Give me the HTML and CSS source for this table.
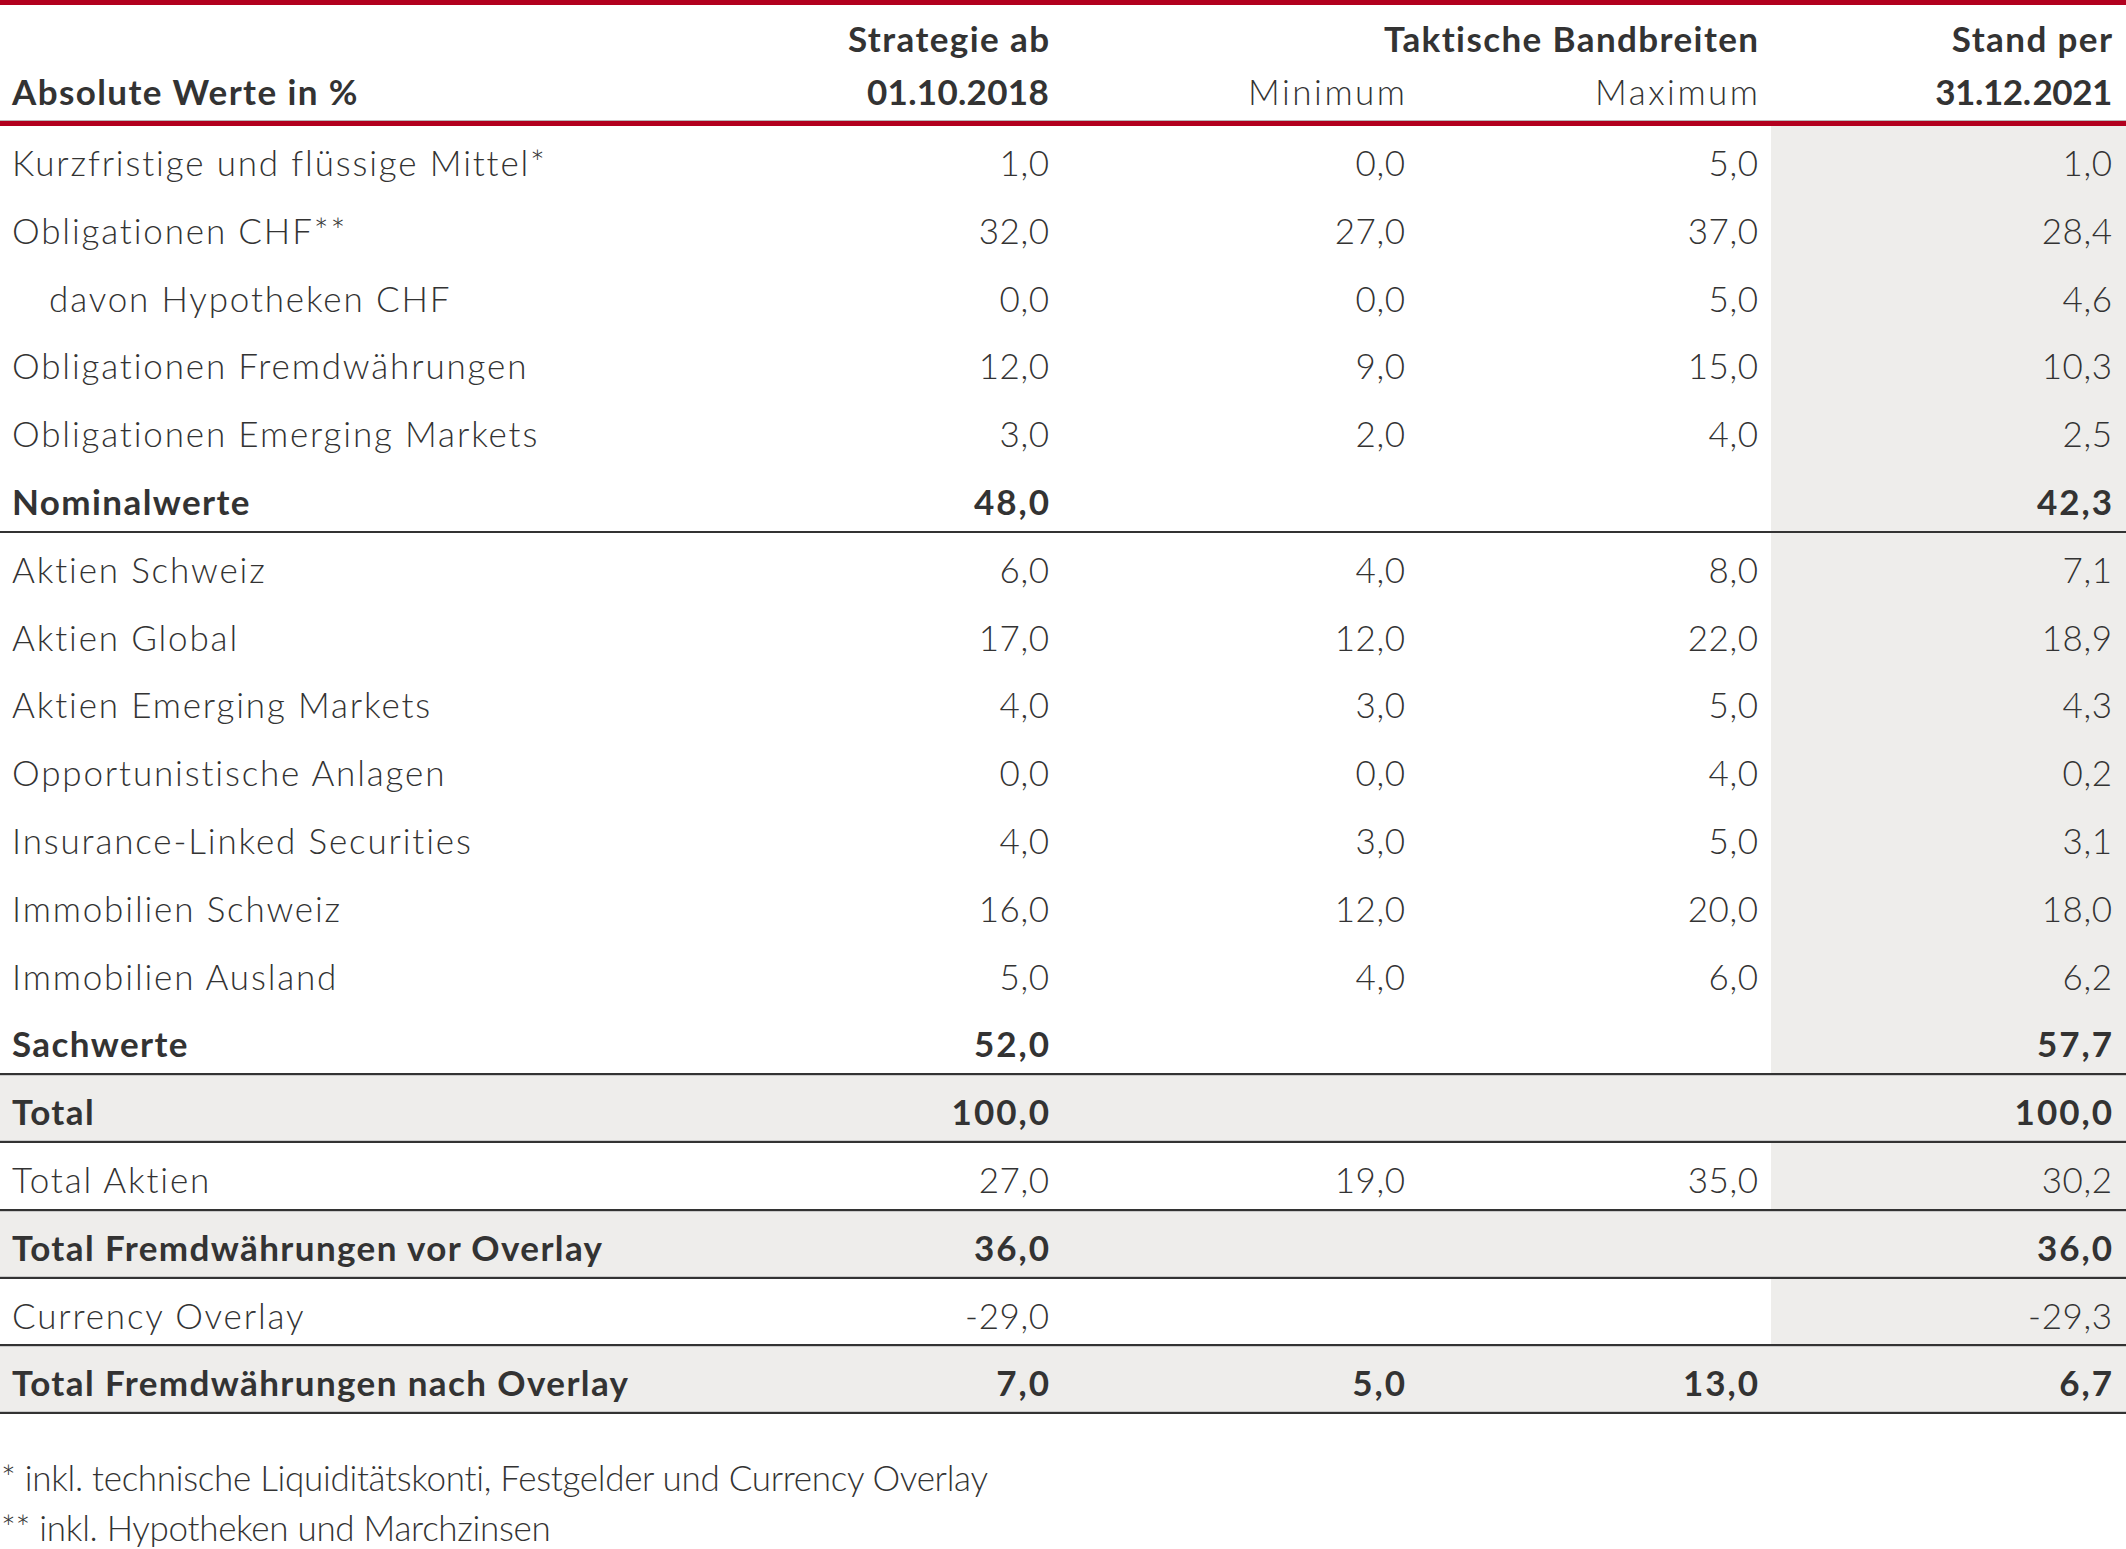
FILE: index.html
```html
<!DOCTYPE html>
<html lang="de">
<head>
<meta charset="utf-8">
<title>Anlagestrategie</title>
<link rel="stylesheet" href="styles.css">
</head>
<body>
<div class="tbl">
  <div class="head">
    <div class="hrow">
      <div class="hc label"></div>
      <div class="hc c1 b word">Strategie ab</div>
      <div class="hc span23 b word">Taktische Bandbreiten</div>
      <div class="hc c4 b word">Stand per</div>
    </div>
    <div class="hrow">
      <div class="hc label b word">Absolute Werte in %</div>
      <div class="hc c1 b date">01.10.2018</div>
      <div class="hc c2 lightword">Minimum</div>
      <div class="hc c3 lightword">Maximum</div>
      <div class="hc c4 b date tight">31.12.&#8202;2021</div>
    </div>
  </div>
  <div class="row"><div class="label">Kurzfristige und flüssige Mittel*</div><div class="c1">1,0</div><div class="c2">0,0</div><div class="c3">5,0</div><div class="c4 sh">1,0</div></div>
  <div class="row"><div class="label">Obligationen CHF**</div><div class="c1">32,0</div><div class="c2">27,0</div><div class="c3">37,0</div><div class="c4 sh">28,4</div></div>
  <div class="row"><div class="label indent">davon Hypotheken CHF</div><div class="c1">0,0</div><div class="c2">0,0</div><div class="c3">5,0</div><div class="c4 sh">4,6</div></div>
  <div class="row"><div class="label">Obligationen Fremdwährungen</div><div class="c1">12,0</div><div class="c2">9,0</div><div class="c3">15,0</div><div class="c4 sh">10,3</div></div>
  <div class="row"><div class="label">Obligationen Emerging Markets</div><div class="c1">3,0</div><div class="c2">2,0</div><div class="c3">4,0</div><div class="c4 sh">2,5</div></div>
  <div class="row bold line"><div class="label">Nominalwerte</div><div class="c1">48,0</div><div class="c2"></div><div class="c3"></div><div class="c4 sh">42,3</div></div>
  <div class="row"><div class="label">Aktien Schweiz</div><div class="c1">6,0</div><div class="c2">4,0</div><div class="c3">8,0</div><div class="c4 sh">7,1</div></div>
  <div class="row"><div class="label">Aktien Global</div><div class="c1">17,0</div><div class="c2">12,0</div><div class="c3">22,0</div><div class="c4 sh">18,9</div></div>
  <div class="row"><div class="label">Aktien Emerging Markets</div><div class="c1">4,0</div><div class="c2">3,0</div><div class="c3">5,0</div><div class="c4 sh">4,3</div></div>
  <div class="row"><div class="label">Opportunistische Anlagen</div><div class="c1">0,0</div><div class="c2">0,0</div><div class="c3">4,0</div><div class="c4 sh">0,2</div></div>
  <div class="row"><div class="label">Insurance-Linked Securities</div><div class="c1">4,0</div><div class="c2">3,0</div><div class="c3">5,0</div><div class="c4 sh">3,1</div></div>
  <div class="row"><div class="label">Immobilien Schweiz</div><div class="c1">16,0</div><div class="c2">12,0</div><div class="c3">20,0</div><div class="c4 sh">18,0</div></div>
  <div class="row"><div class="label">Immobilien Ausland</div><div class="c1">5,0</div><div class="c2">4,0</div><div class="c3">6,0</div><div class="c4 sh">6,2</div></div>
  <div class="row bold line"><div class="label">Sachwerte</div><div class="c1">52,0</div><div class="c2"></div><div class="c3"></div><div class="c4 sh">57,7</div></div>
  <div class="row bold line grey"><div class="label">Total</div><div class="c1">100,0</div><div class="c2"></div><div class="c3"></div><div class="c4">100,0</div></div>
  <div class="row line"><div class="label">Total Aktien</div><div class="c1">27,0</div><div class="c2">19,0</div><div class="c3">35,0</div><div class="c4 sh">30,2</div></div>
  <div class="row bold line grey"><div class="label">Total Fremdwährungen vor Overlay</div><div class="c1">36,0</div><div class="c2"></div><div class="c3"></div><div class="c4">36,0</div></div>
  <div class="row line"><div class="label">Currency Overlay</div><div class="c1">-29,0</div><div class="c2"></div><div class="c3"></div><div class="c4 sh">-29,3</div></div>
  <div class="row bold line grey"><div class="label">Total Fremdwährungen nach Overlay</div><div class="c1">7,0</div><div class="c2">5,0</div><div class="c3">13,0</div><div class="c4">6,7</div></div>
</div>
<div class="notes">
  <p>* inkl. technische Liquiditätskonti, Festgelder und Currency Overlay</p>
  <p>** inkl. Hypotheken und Marchzinsen</p>
</div>
</body>
</html>
```

FILE: styles.css
```css
html, body {
  margin: 0;
  padding: 0;
  background: #ffffff;
}
body {
  font-family: Lato, "Liberation Sans", sans-serif;
  color: #333333;
  font-weight: 300;
  font-size: 35px;
}
.tbl {
  width: 2126px;
}
.head {
  border-top: 5px solid #b2001e;
  border-bottom: 5px solid #b2001e;
  box-shadow: inset 0 -1px 0 #b9b9b9;
  padding: 7px 0 3px;
}
.hrow, .row {
  display: grid;
  grid-template-columns: 709px 353px 355px 354px 355px;
}
.hrow {
  height: 53px;
  line-height: 53px;
}
.hc {
  white-space: nowrap;
}
.b, .bold {
  font-weight: 700;
}
.label {
  padding-left: 12px;
  text-align: left;
  white-space: nowrap;
  letter-spacing: 1.85px;
}
.bold .label {
  letter-spacing: 1.4px;
}
.indent {
  padding-left: 49px;
}
.c1, .c2, .c3, .c4, .span23 {
  text-align: right;
  white-space: nowrap;
}
.c1 { padding-right: 13px; }
.c2 { padding-right: 12px; }
.c3 { padding-right: 13px; }
.c4 { padding-right: 14px; }
.span23 {
  grid-column: 3 / 5;
  padding-right: 13px;
}

/* header tracking (trailing spacing compensated in padding) */
.hc.word {
  letter-spacing: 1.4px;
}
.hc.c1.word { padding-right: 11.6px; }
.hc.c4.word { padding-right: 12.6px; }
.hc.span23.word { padding-right: 11.6px; }
.hc.label.word { padding-right: 0; }
.hc.date {
  letter-spacing: 0.3px;
}
.hc.date.tight {
  letter-spacing: -0.4px;
}
.hc.lightword {
  letter-spacing: 2.5px;
}
.hc.c2.lightword { padding-right: 9.5px; }
.hc.c3.lightword { padding-right: 10.5px; }

.row {
  height: 67.8px;
  box-sizing: border-box;
  line-height: 42px;
}
.row > div {
  padding-top: 15px;
}
.row > .c1, .row > .c2, .row > .c3, .row > .c4 {
  letter-spacing: 0.6px;
}
.row > .c1 { padding-right: 12.4px; }
.row > .c2 { padding-right: 11.4px; }
.row > .c3 { padding-right: 12.4px; }
.row > .c4 { padding-right: 13.4px; }
.row.bold > .c1, .row.bold > .c2, .row.bold > .c3, .row.bold > .c4 {
  letter-spacing: 2px;
}
.row.bold > .c1 { padding-right: 11px; }
.row.bold > .c2 { padding-right: 10px; }
.row.bold > .c3 { padding-right: 11px; }
.row.bold > .c4 { padding-right: 12px; }

.sh {
  background: #eeedeb;
}
.grey {
  background: #eeedeb;
  box-shadow: inset 0 1px 0 #c9c9c9, inset 0 -1px 0 #c9c9c9;
}
.line {
  border-bottom: 2px solid #333333;
}
.notes {
  margin-top: 39px;
  font-size: 35px;
  line-height: 49.5px;
  letter-spacing: -0.3px;
}
.notes p {
  margin: 0;
  padding-left: 1px;
}
```
